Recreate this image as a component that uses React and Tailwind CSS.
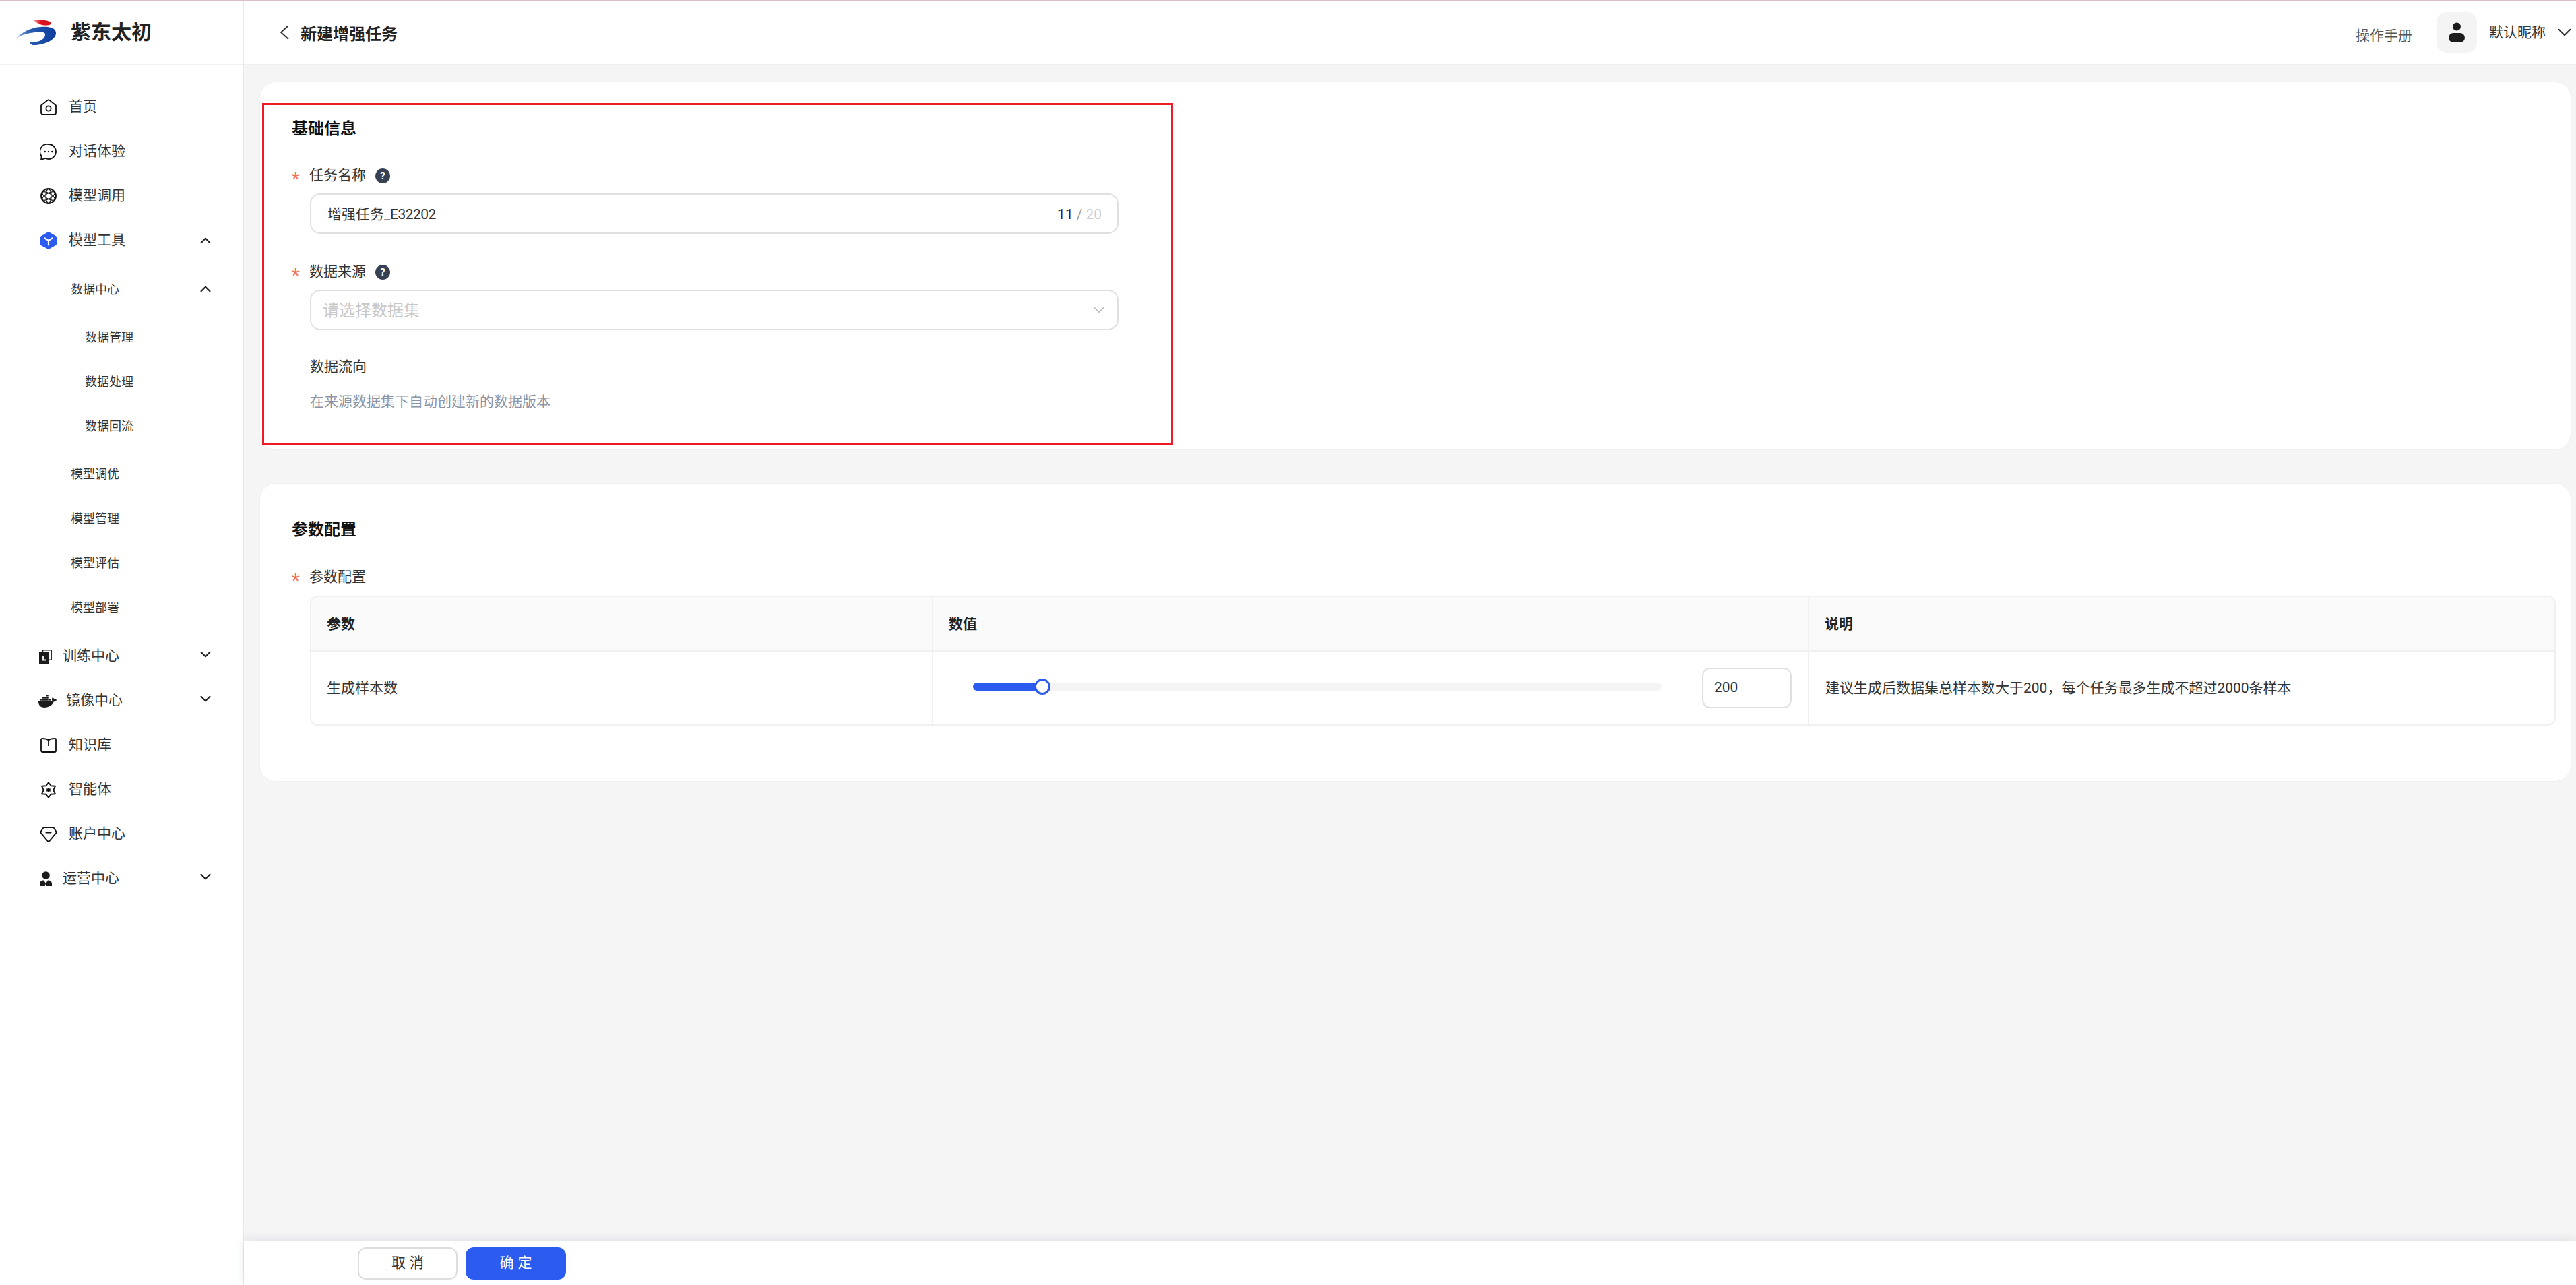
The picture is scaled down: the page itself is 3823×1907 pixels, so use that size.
// New augmentation task page
import React from "react";
import { ChevronUp, ChevronDown } from "lucide-react";
import { FaDocker } from "react-icons/fa";

const HomeIcon = () => (
  <svg width="24" height="24" viewBox="0 0 24 24" fill="none" stroke="#111" strokeWidth="1.8" strokeLinejoin="round">
    <path d="M1 9.5 11 1.6a1.6 1.6 0 0 1 2 0l10 7.9V20a3 3 0 0 1-3 3H4a3 3 0 0 1-3-3z" />
    <circle cx="12" cy="14" r="3.6" />
  </svg>
);

const ChatIcon = () => (
  <svg width="24" height="24" viewBox="0 0 24 24" fill="none" stroke="#111" strokeWidth="1.8" strokeLinejoin="round">
    <path d="M12 1a11 11 0 1 1-4.6 21C5 23 3 23.300 1 23.300c.6-1 .6-3 .4-5A11 11 0 0 1 12 1z" />
    <circle cx="6.800" cy="12" r="1.200" fill="#111" stroke="none" />
    <circle cx="12" cy="12" r="1.200" fill="#111" stroke="none" />
    <circle cx="17.200" cy="12" r="1.200" fill="#111" stroke="none" />
  </svg>
);

const ModelIcon = () => (
  <svg width="24" height="24" viewBox="0 0 24 24" fill="none" stroke="#111" strokeWidth="1.2">
    <circle cx="12" cy="12" r="11" strokeWidth="1.800" />
    <ellipse cx="12" cy="12" rx="4" ry="10.500" />
    <ellipse cx="12" cy="12" rx="4" ry="10.500" transform="rotate(60 12 12)" />
    <ellipse cx="12" cy="12" rx="4" ry="10.500" transform="rotate(120 12 12)" />
  </svg>
);

const ToolIcon = () => (
  <svg width="24" height="26" viewBox="0 0 24 26" fill="none">
    <path d="M11 .6a2 2 0 0 1 2 0l10 5.700a2 2 0 0 1 1 1.700v10a2 2 0 0 1-1 1.700l-10 5.700a2 2 0 0 1-2 0L1 20.200a2 2 0 0 1-1-1.700V8a2 2 0 0 1 1-1.700z" fill="#2b5bef" />
    <path d="M6.500 9.500 12 13l5.500-3.500M12 13v6.500" stroke="#fff" strokeWidth="2.200" strokeLinecap="round" />
  </svg>
);

const TrainIcon = () => (
  <svg width="19" height="21" viewBox="0 0 19 21" fill="none">
    <path d="M5.500 3V.8h12.700v14.500H15" stroke="#1c1c1c" strokeWidth="1.500" />
    <rect x="0" y="3.500" width="15" height="17.500" fill="#1c1c1c" />
    <path d="M6 9v6.500h4.500" stroke="#fff" strokeWidth="1.800" />
  </svg>
);

const BookIcon = () => (
  <svg width="24" height="22" viewBox="0 0 24 22" fill="none" stroke="#111" strokeWidth="1.800" strokeLinejoin="round">
    <path d="M1 2.500C1 1.500 1.800 1 2.800 1 7 1 10 1.500 12 3.500 14 1.500 17 1 21.200 1c1 0 1.800.5 1.800 1.500V19a2 2 0 0 1-2 2H3a2 2 0 0 1-2-2z" />
    <path d="M12 3.500V12" />
  </svg>
);

const AgentIcon = () => (
  <svg width="24" height="25" viewBox="0 0 24 24" fill="none">
    <polygon
      points="12,0.800 15.600,5.760 22,6.250 19.200,12 22,17.750 15.600,18.240 12,23.200 8.400,18.240 2,17.750 4.800,12 2,6.250 8.400,5.760"
      stroke="#111"
      strokeWidth="1.800"
      strokeLinejoin="round"
    />
    <polygon points="12,8.200 15.300,14 8.700,14" fill="#111" />
    <polygon points="12,15.800 8.700,10 15.300,10" fill="#111" />
  </svg>
);

const AccountIcon = () => (
  <svg width="26" height="23" viewBox="0 0 26 23" fill="none" stroke="#111" strokeWidth="1.800" strokeLinejoin="round">
    <path d="M6.500 1h13a1.500 1.500 0 0 1 1.200.6l4 5.800a1 1 0 0 1-.1 1.300L14 21.300a1.400 1.400 0 0 1-2 0L1.400 8.700a1 1 0 0 1-.1-1.300l4-5.800A1.500 1.500 0 0 1 6.500 1z" />
    <path d="M9.500 8.500h7" strokeWidth="2" strokeLinecap="round" />
  </svg>
);

const OpsIcon = () => (
  <svg width="18" height="22" viewBox="0 0 18 22" fill="none">
    <circle cx="9" cy="6" r="5.800" fill="#1c1c1c" />
    <path d="M0 22v-3.500C0 15.500 2.500 13.500 6 13.500l3 4.500 3-4.500c3.500 0 6 2 6 5V22z" fill="#1c1c1c" />
    <path d="M9 18.500 7.800 22h2.400z" fill="#fff" />
  </svg>
);

const Logo = () => (
  <svg width="60" height="38" viewBox="0 0 60 38">
    <defs>
      <linearGradient id="logoBlue" x1="0" y1="0" x2="1" y2="0">
        <stop offset="0" stopColor="#9db9e2" />
        <stop offset="0.35" stopColor="#2a5cb0" />
        <stop offset="1" stopColor="#0c3c9c" />
      </linearGradient>
      <linearGradient id="logoRed" x1="0" y1="0" x2="1" y2="0">
        <stop offset="0" stopColor="#f4a5a5" />
        <stop offset="0.4" stopColor="#e0141e" />
        <stop offset="1" stopColor="#d9101a" />
      </linearGradient>
    </defs>
    <path d="M26 1C34 0 46 0 51 4c2 4-3 5-9 4.500C36 8 30 5 26 1z" fill="url(#logoRed)" />
    <path
      d="M0 27.500C10 18 22 12 36 11c12-1 23 1 23 9 0 11-19 18-33 18-3 0-6-2-5-5 9 2 21-2 22-10 1-5-7-5-15-4-10 1-20 4-28 8.500z"
      fill="url(#logoBlue)"
    />
  </svg>
);

const NavItem = ({ icon, boxClass, label, chevron }) => (
  <div className="flex h-[66px] items-center pl-[57px] pr-[42px] text-[21px] text-[#333]">
    <span className={`flex shrink-0 items-center ${boxClass}`}>{icon}</span>
    <span className="flex-1">{label}</span>
    {chevron === "up" && <ChevronUp size={26} color="#222" />}
    {chevron === "down" && <ChevronDown size={26} color="#222" className="-mt-[6px]" />}
  </div>
);

const SubItem = ({ label, chevron }) => (
  <div className="flex h-[66px] items-center pl-[105px] pr-[42px] text-[18px] text-[#333]">
    <span className="flex-1">{label}</span>
    {chevron && <ChevronUp size={26} color="#222" />}
  </div>
);

const Sidebar = () => (
  <aside className="flex w-[362px] shrink-0 flex-col border-r-2 border-[#e8e8f5] bg-white">
    <div className="flex h-[96px] shrink-0 items-center border-b-2 border-[#f0f0f0] pl-[24px]">
      <Logo />
      <span className="ml-[21px] text-[30px] font-bold leading-none text-[#222]">紫东太初</span>
    </div>
    <nav className="flex flex-col pt-[29px]">
      <NavItem icon={<HomeIcon />} boxClass="w-[45px] pl-[3px]" label="首页" />
      <NavItem icon={<ChatIcon />} boxClass="w-[45px] pl-[3px]" label="对话体验" />
      <NavItem icon={<ModelIcon />} boxClass="w-[45px] pl-[3px]" label="模型调用" />
      <NavItem icon={<ToolIcon />} boxClass="w-[45px] pl-[3px]" label="模型工具" chevron="up" />
      <div className="mt-[6px]">
        <SubItem label="数据中心" chevron />
      </div>
      <div className="mt-[5px] flex flex-col pl-[21px]">
        <SubItem label="数据管理" />
        <SubItem label="数据处理" />
        <SubItem label="数据回流" />
      </div>
      <div className="mt-[5px]">
        <SubItem label="模型调优" />
        <SubItem label="模型管理" />
        <SubItem label="模型评估" />
        <SubItem label="模型部署" />
      </div>
      <div className="mt-[7px]">
        <NavItem icon={<TrainIcon />} boxClass="w-[36px] pl-[1px]" label="训练中心" chevron="down" />
        <NavItem icon={<FaDocker size={27} color="#1c1c1c" />} boxClass="w-[41px]" label="镜像中心" chevron="down" />
        <NavItem icon={<BookIcon />} boxClass="w-[45px] pl-[3px]" label="知识库" />
        <NavItem icon={<AgentIcon />} boxClass="w-[45px] pl-[3px]" label="智能体" />
        <NavItem icon={<AccountIcon />} boxClass="w-[45px] pl-[2px]" label="账户中心" />
        <NavItem icon={<OpsIcon />} boxClass="w-[36px] pl-[2px]" label="运营中心" chevron="down" />
      </div>
    </nav>
  </aside>
);

const Header = () => (
  <header className="flex h-[96px] shrink-0 items-center border-b-2 border-[#f0f0f0] bg-white pl-[53px]">
    <svg width="14" height="22" viewBox="0 0 14 22" fill="none" stroke="#333" strokeWidth="1.800">
      <path d="M13 1 2 11l11 10" />
    </svg>
    <h1 className="ml-[17px] mt-[5px] flex-1 text-[24px] font-bold text-[#222]">新建增强任务</h1>
    <a className="mt-[12px] text-[21px] text-[#555]">操作手册</a>
    <div className="ml-[36px] flex h-[60px] w-[60px] items-center justify-center rounded-[15px] bg-[#f4f4f4]">
      <svg width="24" height="30" viewBox="0 0 24 30" fill="#1c1c1c">
        <circle cx="12" cy="6.500" r="6" />
        <rect x="0" y="16" width="24" height="14" rx="7" />
      </svg>
    </div>
    <span className="ml-[18px] mt-[1px] text-[21px] text-[#333]">默认昵称</span>
    <ChevronDown size={34} color="#333" strokeWidth={1.4} className="ml-[11px]" />
  </header>
);

const HelpIcon = () => (
  <span className="ml-[14px] flex h-[22px] w-[22px] items-center justify-center rounded-full bg-[#374151] text-[15px] font-bold leading-none text-white">
    ?
  </span>
);

const FieldLabel = ({ label, help, className }) => (
  <div className={`flex h-[32px] items-center text-[21px] text-[#333] ${className}`}>
    <span className="w-[26px] pt-[10px] text-[27px] leading-none text-[#f5704f]">*</span>
    {label}
    {help && <HelpIcon />}
  </div>
);

const BasicInfo = () => (
  <section className="rounded-[24px] border border-[#f0f0f0] bg-white pl-[3px] pt-[31px] pb-[7px]">
    <div className="h-[507px] w-[1352px] border-[3px] border-[#ed1c24] pl-[41px] pt-[17px]">
      <h2 className="h-[36px] text-[24px] font-bold leading-[36px] text-[#111]">基础信息</h2>
      <FieldLabel label="任务名称" help className="mt-[36px]" />
      <div className="mt-[10px] ml-[27px] flex h-[60px] w-[1200px] items-center rounded-[15px] border-2 border-[#e0e0e0] pl-[24px] pr-[23px] pt-[3px] text-[21px]">
        <span className="flex-1 text-[#333]">
          增强任务<span className="tracking-[-0.5px]">_E32202</span>
        </span>
        <span className="text-[#333]">11</span>
        <span className="mx-[5px] text-[#999]">/</span>
        <span className="text-[#ccd0d5]">20</span>
      </div>
      <FieldLabel label="数据来源" help className="mt-[41px]" />
      <div className="mt-[10px] ml-[27px] flex h-[60px] w-[1200px] items-center rounded-[15px] border-2 border-[#e0e0e0] pl-[17px] pr-[14px]">
        <span className="flex-1 pt-[2px] text-[24px] text-[#c8c8c8]">请选择数据集</span>
        <ChevronDown size={26} color="#b8b8b8" strokeWidth={1.4} />
      </div>
      <div className="mt-[38px] ml-[27px] h-[32px] text-[21px] leading-[32px] text-[#333]">数据流向</div>
      <div className="mt-[20px] ml-[27px] h-[32px] text-[21px] leading-[32px] text-[#8a94a6]">
        在来源数据集下自动创建新的数据版本
      </div>
    </div>
  </section>
);

const ParamTable = () => (
  <div className="mt-[11px] grid grid-cols-[922px_1300px_1fr] overflow-hidden rounded-[12px] border-2 border-[#f0f0f0] text-[21px] text-[#333]">
    <div className="flex h-[81px] items-center border-r border-b-2 border-[#f0f0f0] bg-[#fafafa] pl-[23px] pt-[2px] font-bold text-[#222]">参数</div>
    <div className="flex h-[81px] items-center border-r border-b-2 border-[#f0f0f0] bg-[#fafafa] pl-[24px] pt-[2px] font-bold text-[#222]">数值</div>
    <div className="flex h-[81px] items-center border-b-2 border-[#f0f0f0] bg-[#fafafa] pl-[24px] pt-[2px] font-bold text-[#222]">说明</div>
    <div className="flex h-[108px] items-center border-r border-[#f0f0f0] pl-[23px] pt-[2px]">生成样本数</div>
    <div className="flex h-[108px] items-center border-r border-[#f0f0f0] pl-[60px]">
      <div className="relative -mt-[4px] h-[12px] w-[1022px] rounded-full bg-[#f4f4f4]">
        <div className="h-full w-[100px] rounded-l-full bg-[#2b5bef]" />
        <div className="absolute left-[91px] top-[-6px] h-[24px] w-[24px] rounded-full border-[3px] border-[#2b5bef] bg-white" />
      </div>
      <div className="ml-[60px] flex h-[60px] w-[133px] items-center rounded-[12px] border-2 border-[#e0e0e0] pl-[16px]">200</div>
    </div>
    <div className="flex h-[108px] items-center pl-[25px] pt-[2px]">建议生成后数据集总样本数大于200，每个任务最多生成不超过2000条样本</div>
  </div>
);

const ParamConfig = () => (
  <section className="mt-[49px] h-[443px] rounded-[24px] border border-[#f0f0f0] bg-white pl-[74px] pr-[22px] pt-[50px]">
    <h2 className="-ml-[27px] h-[36px] text-[24px] font-bold leading-[36px] text-[#111]">参数配置</h2>
    <FieldLabel label="参数配置" className="-ml-[27px] mt-[37px]" />
    <ParamTable />
  </section>
);

export default function App() {
  return (
    <div
      className="flex h-screen w-full flex-col overflow-hidden bg-white"
      style={{ fontFamily: 'Roboto, "Noto Sans CJK SC", sans-serif' }}
    >
      <div className="h-px shrink-0 bg-[#d6bfc9]" />
      <div className="flex min-h-0 flex-1">
        <Sidebar />
        <div className="flex min-w-0 flex-1 flex-col">
          <Header />
          <main className="min-h-0 flex-1 overflow-hidden bg-[#f5f5f5] pl-[23px] pr-[7px] pt-[24px]">
            <BasicInfo />
            <ParamConfig />
          </main>
          <footer className="relative flex h-[65px] shrink-0 items-start gap-[12px] bg-white pl-[169px] pt-[9px] shadow-[0_-3px_12px_rgba(180,185,200,0.35)]">
            <button className="h-[48px] w-[148px] rounded-[12px] border-2 border-[#dedede] pl-[6px] text-[21px] tracking-[6px] text-[#333]">取消</button>
            <button className="h-[48px] w-[149px] rounded-[12px] bg-[#2b5bef] pl-[6px] text-[21px] tracking-[6px] text-white">确定</button>
          </footer>
        </div>
      </div>
    </div>
  );
}
